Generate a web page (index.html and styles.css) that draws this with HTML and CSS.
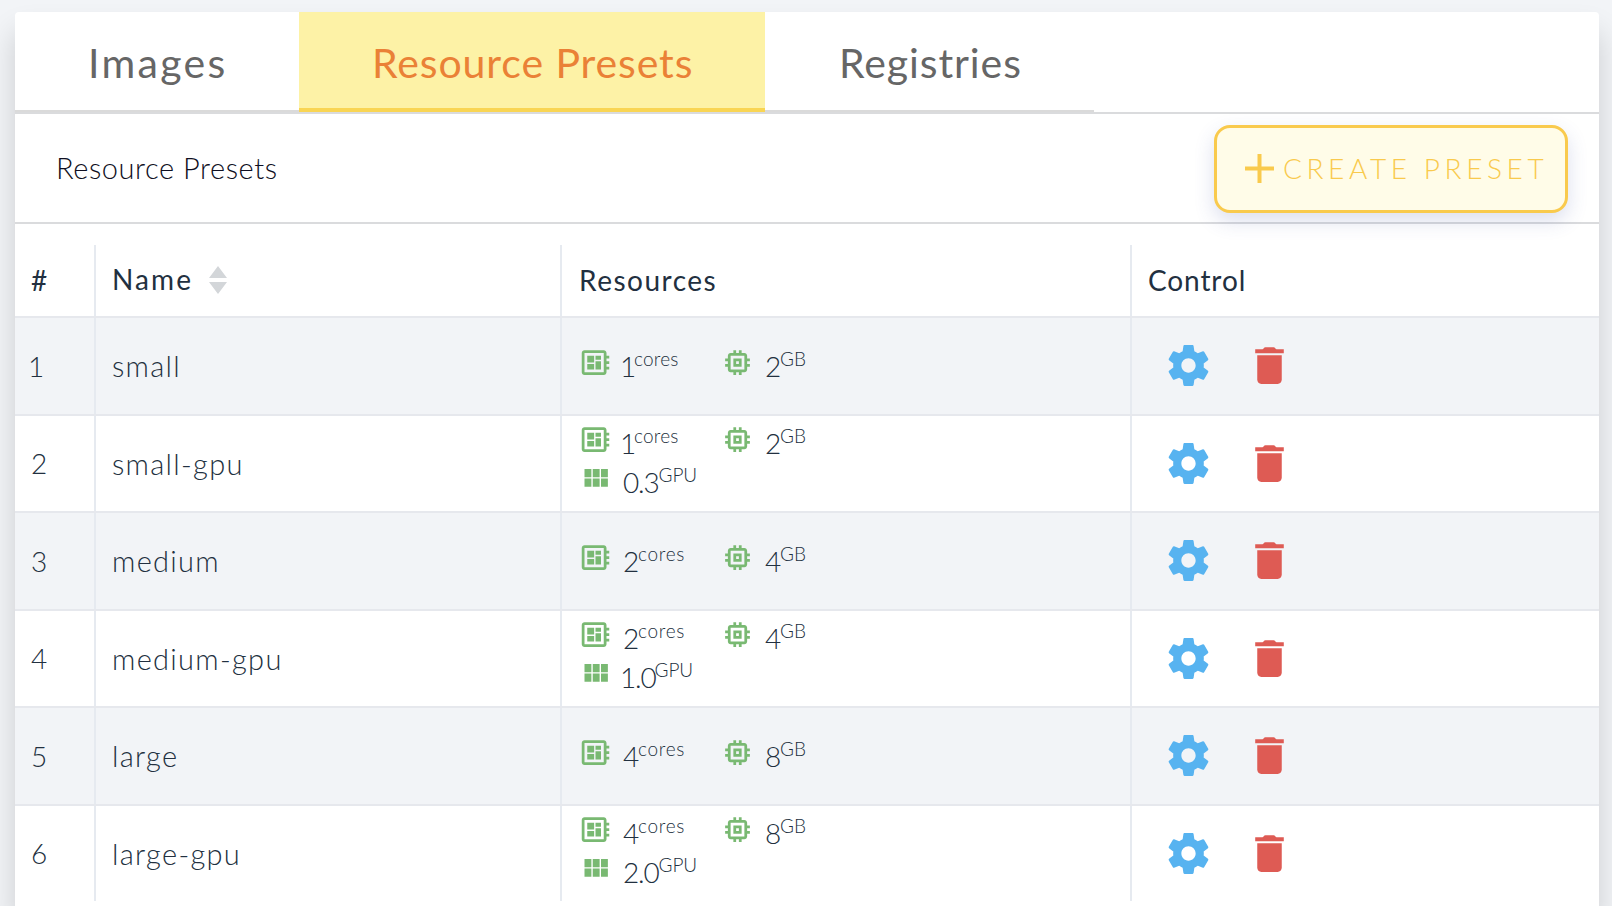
FILE: index.html
```html
<!DOCTYPE html>
<html lang="en">
<head>
  <meta charset="UTF-8">
  <title>Resource Presets</title>
  <link rel="stylesheet" href="styles.css">
</head>
<body>
  <svg class="sprite">
    <symbol id="cores" viewBox="0 0 24 24"><path d="M22 9V7h-2V5c0-1.1-.9-2-2-2H4c-1.1 0-2 .9-2 2v14c0 1.1.9 2 2 2h14c1.1 0 2-.9 2-2v-2h2v-2h-2v-2h2v-2h-2V9h2zm-4 10H4V5h14v14zM6 13h5v4H6zm6-6h4v3h-4zM6 7h5v5H6zm6 4h4v6h-4z"/></symbol>
    <symbol id="memory" viewBox="0 0 24 24"><path d="M15 9H9v6h6V9zm-2 4h-2v-2h2v2zm8-2V9h-2V7c0-1.1-.9-2-2-2h-2V3h-2v2h-2V3H9v2H7c-1.1 0-2 .9-2 2v2H3v2h2v2H3v2h2v2c0 1.1.9 2 2 2h2v2h2v-2h2v2h2v-2h2c1.1 0 2-.9 2-2v-2h2v-2h-2v-2h2zm-4 6H7V7h10v10z"/></symbol>
    <symbol id="gpu" viewBox="0 0 24 24"><path d="M4 11h5V5H4v6zm0 7h5v-6H4v6zm6 0h5v-6h-5v6zm6 0h5v-6h-5v6zm-6-7h5V5h-5v6zm6-6v6h5V5h-5z"/></symbol>
    <symbol id="gear" viewBox="0 0 24 24"><path d="M19.43 12.98c.04-.32.07-.64.07-.98s-.03-.66-.07-.98l2.11-1.65c.19-.15.24-.42.12-.64l-2-3.46c-.12-.22-.39-.3-.61-.22l-2.49 1c-.52-.4-1.08-.73-1.69-.98l-.38-2.65C14.46 2.18 14.25 2 14 2h-4c-.25 0-.46.18-.49.42l-.38 2.65c-.61.25-1.17.59-1.69.98l-2.49-1c-.23-.09-.49 0-.61.22l-2 3.46c-.13.22-.07.49.12.64l2.11 1.65c-.04.32-.07.65-.07.98s.03.66.07.98l-2.11 1.65c-.19.15-.24.42-.12.64l2 3.46c.12.22.39.3.61.22l2.49-1c.52.4 1.08.73 1.69.98l.38 2.65c.03.24.24.42.49.42h4c.25 0 .46-.18.49-.42l.38-2.65c.61-.25 1.17-.59 1.69-.98l2.49 1c.23.09.49 0 .61-.22l2-3.46c.12-.22.07-.49-.12-.64l-2.11-1.65zM12 15.5c-1.93 0-3.5-1.57-3.5-3.5s1.57-3.5 3.5-3.5 3.5 1.57 3.5 3.5-1.57 3.5-3.5 3.5z"/></symbol>
    <symbol id="trash" viewBox="0 0 24 24"><path d="M6 19c0 1.1.9 2 2 2h8c1.1 0 2-.9 2-2V7H6v12zM19 4h-3.5c-.5-.1-.8-1-1.500-1h-4c-.7 0-1 .9-1.500 1H5v2h14V4z"/></symbol>
  </svg>

  <div class="card">
    <div class="tabs">
      <div class="tab images"><span>Images</span></div>
      <div class="tab presets active"><span>Resource Presets</span></div>
      <div class="tab registries"><span>Registries</span></div>
    </div>

    <div class="toolbar">
      <span class="title">Resource Presets</span>
      <button class="create">
        <svg viewBox="0 0 29 29"><path d="M12.500 0h4v12.500H29v4H16.500V29h-4V16.500H0v-4h12.500z"/></svg>
        <span>CREATE PRESET</span>
      </button>
    </div>

    <div class="table" id="table">
      <div class="row head">
        <div>#</div>
        <div class="sortable"><span>Name</span><svg viewBox="0 0 18 28"><path d="M9 0l9 12H0zM9 28l9-12H0z"/></svg></div>
        <div class="col-resources">Resources</div>
        <div class="col-control">Control</div>
      </div>
    </div>
  </div>

  <script>
    const presets = [
      { name: 'small', cores: '1', mem: '2' },
      { name: 'small-gpu', cores: '1', mem: '2', gpu: '0.3' },
      { name: 'medium', cores: '2', mem: '4' },
      { name: 'medium-gpu', cores: '2', mem: '4', gpu: '1.0' },
      { name: 'large', cores: '4', mem: '8' },
      { name: 'large-gpu', cores: '4', mem: '8', gpu: '2.0' }
    ];

    const icon = (id, cls) => `<svg class="${cls}"><use href="#${id}"/></svg>`;
    // a leading 1 is a narrow digit, pull it in
    const narrow = value => value.startsWith('1') ? ' one' : '';
    const resource = (id, value, unit) =>
      `<div class="resource">${icon(id, 'res-icon')}<span class="value${narrow(value)}">${value}</span><span class="unit ${unit}">${unit}</span></div>`;

    const table = document.getElementById('table');
    presets.forEach((p, i) => {
      const row = document.createElement('div');
      row.className = 'row';
      row.innerHTML = `
        <div><span class="${narrow(String(i + 1))}">${i + 1}</span></div>
        <div class="name">${p.name}</div>
        <div class="resources">
          ${resource('cores', p.cores, 'cores')}
          ${resource('memory', p.mem, 'GB')}
          ${p.gpu ? resource('gpu', p.gpu, 'GPU') : ''}
        </div>
        <div class="controls">${icon('gear', 'gear')}${icon('trash', 'trash')}</div>`;
      table.appendChild(row);
    });
  </script>
</body>
</html>
```
FILE: styles.css
```css
* {
  box-sizing: border-box;
}
body {
  margin: 0;
  height: 906px;
  padding: 12px 13px 0 15px;
  overflow: hidden;
  background: #f2f4f7;
  color: #223040;
  font-family: Lato, "Open Sans", sans-serif;
  font-size: 28px;
  font-weight: 300;
}
.sprite {
  display: none;
}
.card {
  height: 894px;
  background: #fff;
  border-radius: 4px 4px 0 0;
  box-shadow: 0 20px 30px rgba(0,0,0,0.16);
}

/* tabs */
.tabs {
  display: flex;
  height: 102px;
  border-bottom: 2px solid #dadbdd;
}
.tab {
  height: 100px;
  border-bottom: 2px solid #dadada;
  padding-left: 73px;
  color: #666;
  font-size: 41px;
  font-weight: 400;
  line-height: 101px;
  white-space: nowrap;
}
.images {
  width: 284px;
  letter-spacing: 2.3px;
}
.presets {
  width: 466px;
  letter-spacing: 0.9px;
}
.registries {
  width: 329px;
  padding-left: 74px;
  letter-spacing: 0.9px;
}
.tab.active {
  background: #fdf2a6;
  border-bottom: 4px solid #f9d553;
  color: #ea8136;
}

/* toolbar */
.toolbar {
  display: flex;
  align-items: center;
  justify-content: space-between;
  height: 110px;
  padding: 0 31px 0 41px;
  border-bottom: 2px solid #dadbdd;
}
.title {
  margin-bottom: 2px;
  color: #0f0f22;
  font-size: 29px;
  letter-spacing: 0.55px;
}
.create {
  display: flex;
  align-items: center;
  width: 354px;
  height: 88px;
  margin-top: 2px;
  padding: 0 0 2px 28px;
  border: 3px solid #f9ca4d;
  border-radius: 16px;
  background: #fffce8;
  color: #f9ca4d;
  font: inherit;
  letter-spacing: 4.6px;
  white-space: nowrap;
  box-shadow: 0 8px 20px rgba(60,80,160,0.18);
}
.create svg {
  width: 29px;
  height: 29px;
  margin-right: 9px;
  fill: #f9ca4d;
}
.create span {
  margin-bottom: 1px;
}

/* table */
.table {
  padding-top: 21px;
}
.row {
  display: grid;
  grid-template-columns: 81px 466px 570px 1fr;
  height: 97.5px;
  border-bottom: 2px solid #e6e8ed;
}
.row:last-child {
  border-bottom-color: transparent;
}
.row:nth-child(even) {
  background: #f2f4f7;
}
.row > div {
  display: flex;
  align-items: center;
  padding-left: 16px;
  border-right: 2px solid #e6eaf0;
}
.row > div:last-child {
  border-right: none;
}
.row.head {
  height: 73px;
  font-weight: 400;
}
.row.head > div {
  padding-bottom: 1px;
}
.row.head > .sortable {
  padding-bottom: 3px;
  letter-spacing: 2.1px;
}
.row.head > .col-resources {
  padding-left: 17px;
  letter-spacing: 1.5px;
}
.row.head > .col-control {
  letter-spacing: 0.9px;
}
.sortable svg {
  width: 18px;
  height: 28px;
  margin: 2px 0 0 16px;
  fill: #d3d6d9;
}
.name {
  font-size: 29px;
  letter-spacing: 1.3px;
}
.one {
  margin: 0 -1px 0 -3px;
}
.row > .resources {
  flex-wrap: wrap;
  align-content: center;
  padding-left: 17px;
}
.resource {
  display: flex;
  width: 142px;
  height: 39px;
  line-height: 39px;
}
/* single line of resources sits a little lower in the row */
.resource:nth-child(2):last-child,
.resource:first-child:nth-last-child(2) {
  position: relative;
  top: 1px;
}
.resource:nth-child(3) {
  width: 100%;
}
.res-icon {
  width: 33px;
  height: 33px;
  margin: -1px 11px 0 0;
  fill: #79b972;
}
.value {
  letter-spacing: -1.2px;
}
.unit {
  padding-top: 2px;
  font-size: 19px;
  line-height: 20px;
}
.unit.cores {
  letter-spacing: 0.7px;
}
.one + .cores {
  letter-spacing: 0.2px;
}
.row > .controls {
  padding: 0 0 0 32px;
}
.gear, .trash {
  width: 49px;
  height: 49px;
}
.gear {
  margin-right: 32px;
  fill: #57b3f0;
}
.trash {
  fill: #de5b54;
}
```
